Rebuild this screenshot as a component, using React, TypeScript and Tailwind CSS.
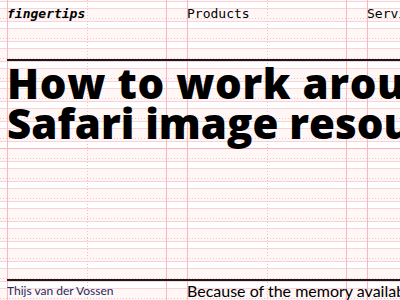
const rows = Array.from({ length: 15 }, (_, i) => i);

function GridRow({ strong }: { strong?: boolean }) {
  return (
    <div className="flex h-[20px] flex-col">
      <div className="h-[7px] border-t border-[#f8d4d8]" />
      <div className={`h-[13px] border-t bg-[#fff6f6] ${strong ? 'border-[#f6b3bc]' : 'border-[#f8d4d8]'}`}>
        <div className="h-[9px]" />
        <div className="h-px bg-[repeating-linear-gradient(to_right,#f4c3ca_0_1px,transparent_1px_3px)]" />
      </div>
    </div>
  );
}

function Solid() {
  return <div className="w-px shrink-0 bg-[#f7b8c0]" />;
}

function Dotted() {
  return <div className="w-px shrink-0 bg-[repeating-linear-gradient(to_bottom,#f4bcc6_0_1px,transparent_1px_3px)]" />;
}

function Grid() {
  return (
    <div className="pointer-events-none absolute inset-0">
      <div className="h-px bg-[#fff6f6]" />
      {rows.map(i => (
        <GridRow key={i} strong={i === 7} />
      ))}
      <div className="absolute inset-0 flex">
        <div className="w-[7px] shrink-0" />
        <Solid />
        <div className="w-[79px] shrink-0" />
        <Dotted />
        <div className="w-[78px] shrink-0" />
        <Solid />
        <div className="w-[20px] shrink-0" />
        <Solid />
        <div className="w-[79px] shrink-0" />
        <Dotted />
        <div className="w-[78px] shrink-0" />
        <Solid />
        <div className="w-[20px] shrink-0" />
        <Solid />
      </div>
    </div>
  );
}

export default function App() {
  return (
    <div className="relative h-[300px] w-[400px] overflow-hidden bg-white">
      <Grid />
      <div className="relative pl-[7px]">
        <nav className="grid h-[59px] grid-cols-[180px_180px_180px] pt-[4px] font-['DejaVu_Sans_Mono',monospace] text-[13px] leading-[20px] text-black">
          <span className="font-bold italic">fingertips</span>
          <span>Products</span>
          <span className="whitespace-nowrap">Services</span>
        </nav>
        <div className="h-[2px] bg-[#1a1a1a]" />

        <h1 className="h-[218px] overflow-hidden whitespace-nowrap pt-[2px] font-['Open_Sans',sans-serif] text-[42px] font-extrabold leading-[40px] text-black">
          <div className="tracking-[0.6px]">How to work around</div>
          <div>Safari image resource limits</div>
        </h1>

        <div className="h-[2px] bg-[#1a1a1a]" />
        <div className="grid grid-cols-[180px_360px] font-['Lato',sans-serif]">
          <p className="text-[12px] leading-[19px] text-[#1d2b5e]">Thijs van der Vossen</p>
          <p className="whitespace-nowrap text-[16px] leading-[20px] text-black">
            Because of the memory available on the iPhone, Safari limits the size of images.
          </p>
        </div>
      </div>
    </div>
  );
}
